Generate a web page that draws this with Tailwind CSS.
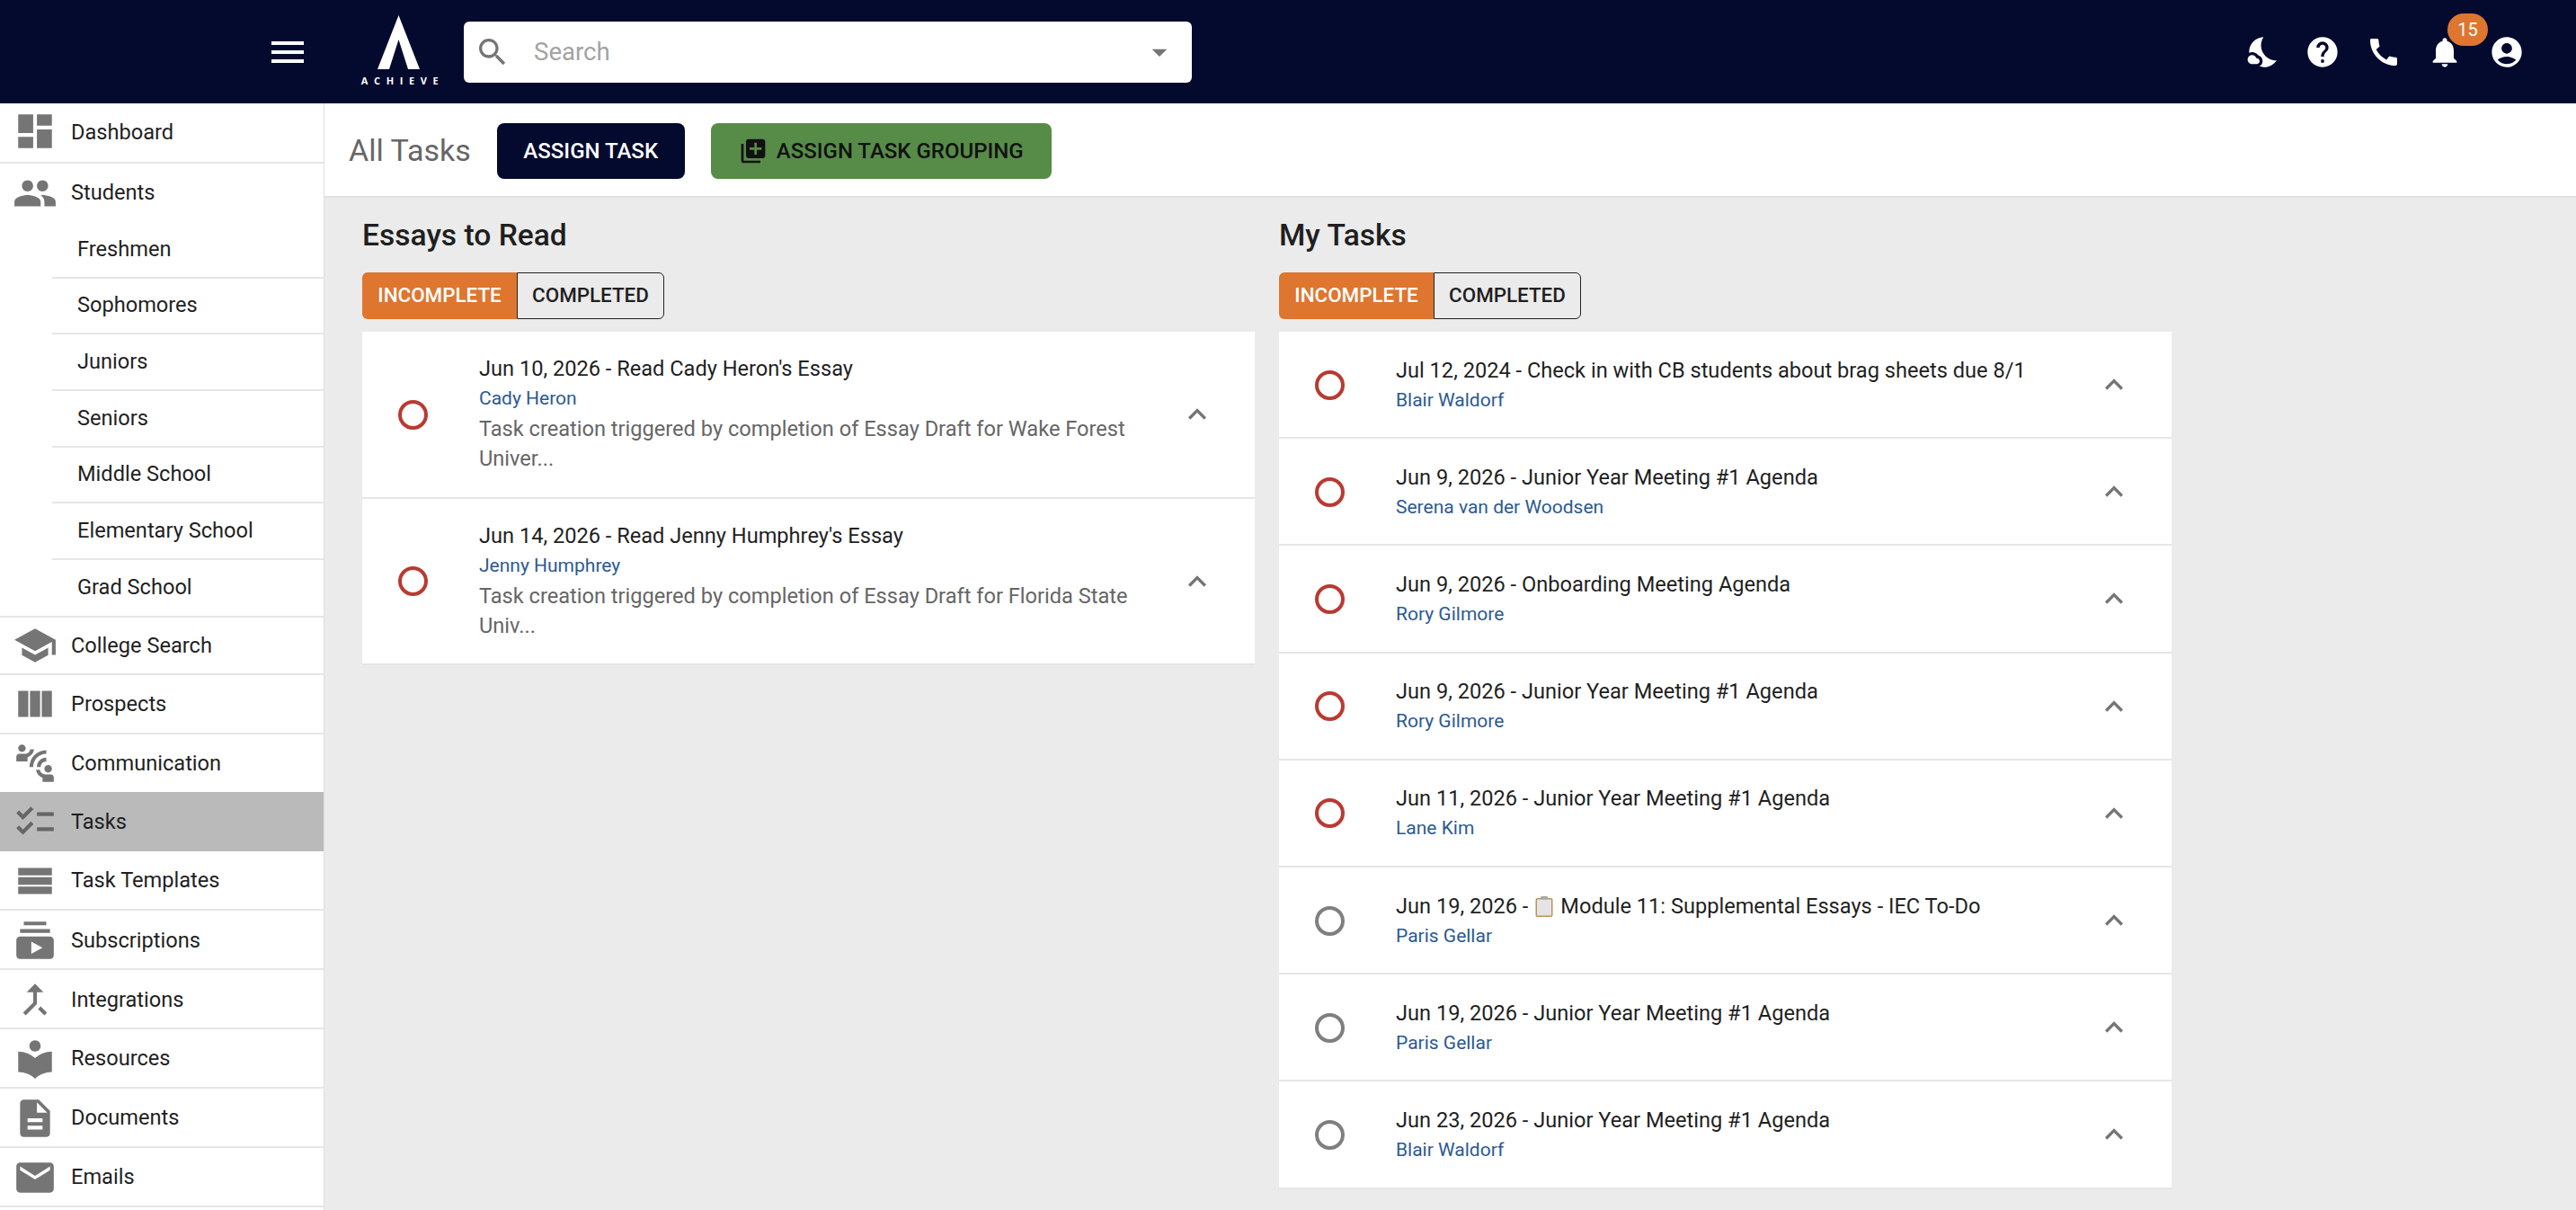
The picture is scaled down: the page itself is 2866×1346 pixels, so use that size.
<!DOCTYPE html>
<html lang="en">
<head>
    <meta charset="UTF-8">
    <title>All Tasks</title>
    <script src="https://cdn.jsdelivr.net/npm/@tailwindcss/browser@4"></script>
</head>
<body class="h-[1346px] overflow-hidden bg-[#ebebeb] font-['Roboto',sans-serif] text-[#1f1f1f]">
    <!-- Top bar -->
    <header class="h-[115px] bg-[#030a2e] flex items-center text-white">
        <div class="w-[360px] flex items-center shrink-0">
            <svg class="ml-[296px] w-[48px] h-[48px] fill-current" viewBox="0 0 24 24"><path d="M3 18h18v-2H3v2zm0-5h18v-2H3v2zm0-7v2h18V6H3z"/></svg>
        </div>
        <div class="w-[100px] shrink-0 ml-[33px] flex flex-col items-center mt-[-2px]">
            <svg class="w-[47px] h-[60px] fill-current" viewBox="0 0 47 60"><polygon points="23.5,0 47,60 34,60 23.5,27 13,60 0,60"/></svg>
            <span class="mt-[6px] text-[11px] leading-[14px] font-bold tracking-[6.6px] pl-[10px] font-['Open_Sans',sans-serif]">ACHIEVE</span>
        </div>
        <div class="w-[810px] h-[68px] ml-[23px] bg-white rounded-[6px] flex items-center pl-[12px] pr-[16px] text-[#757575]">
            <svg class="w-[40px] h-[40px] fill-current" viewBox="0 0 24 24"><path d="M15.5 14h-.79l-.28-.27C15.41 12.59 16 11.11 16 9.5 16 5.91 13.09 3 9.5 3S3 5.91 3 9.5 5.91 16 9.5 16c1.61 0 3.09-.59 4.23-1.57l.27.28v.79l5 4.99L20.49 19l-4.99-5zm-6 0C7.01 14 5 11.99 5 9.5S7.01 5 9.5 5 14 7.01 14 9.5 11.99 14 9.5 14z"/></svg>
            <span class="ml-[26px] pt-[1px] flex-1 text-[27.6px] text-[#a3a3a3]">Search</span>
            <svg class="w-[40px] h-[40px] fill-current" viewBox="0 0 24 24"><path d="M7 10l5 5 5-5z"/></svg>
        </div>
        <div class="ml-auto mr-[57px] flex items-center">
            <svg class="w-[40px] h-[40px] fill-current" viewBox="0 0 24 24"><path d="M11.1 12.08c-2.33-4.51-.5-8.48.53-10.07C6.27 2.2 1.98 6.59 1.98 12c0 .14.02.28.02.42.62-.27 1.29-.42 2-.42 1.66 0 3.18.83 4.1 2.15 1.67.48 2.9 2.02 2.9 3.85 0 1.52-.87 2.83-2.12 3.51.98.32 2.03.5 3.11.5 3.5 0 6.58-1.8 8.37-4.52-2.36.23-6.98-.97-9.26-5.41z"/><path d="M7 16h-.18C6.4 14.84 5.3 14 4 14c-1.66 0-3 1.34-3 3s1.34 3 3 3h3c1.1 0 2-.9 2-2s-.9-2-2-2z"/></svg>
            <svg class="ml-[25px] w-[40px] h-[40px] fill-current" viewBox="0 0 24 24"><path d="M12 2C6.48 2 2 6.48 2 12s4.48 10 10 10 10-4.48 10-10S17.52 2 12 2zm1 17h-2v-2h2v2zm2.07-7.75-.9.92C13.45 12.9 13 13.5 13 15h-2v-.5c0-1.1.45-2.1 1.17-2.83l1.24-1.26c.37-.36.59-.86.59-1.41 0-1.1-.9-2-2-2s-2 .9-2 2H8c0-2.21 1.79-4 4-4s4 1.79 4 4c0 .88-.36 1.68-.93 2.25z"/></svg>
            <svg class="ml-[28px] w-[40px] h-[40px] fill-current" viewBox="0 0 24 24"><path d="M20.01 15.38c-1.23 0-2.42-.2-3.53-.56-.35-.12-.74-.03-1.01.24l-1.57 1.97c-2.83-1.35-5.48-3.9-6.89-6.83l1.95-1.66c.27-.28.35-.67.24-1.02-.37-1.11-.56-2.3-.56-3.53 0-.54-.45-.99-.99-.99H4.19C3.65 3 3 3.24 3 3.99 3 13.28 10.73 21 20.01 21c.71 0 .99-.63.99-1.18v-3.45c0-.54-.45-.99-.99-.99z"/></svg>
            <div class="relative ml-[28px] w-[40px] h-[40px]">
                <svg class="w-[40px] h-[40px] fill-current" viewBox="0 0 24 24"><path d="M12 22c1.1 0 2-.9 2-2h-4c0 1.1.89 2 2 2zm6-6v-5c0-3.07-1.64-5.64-4.5-6.32V4c0-.83-.67-1.5-1.5-1.5s-1.5.67-1.5 1.5v.68C7.63 5.36 6 7.92 6 11v5l-2 2v1h16v-1l-2-2z"/></svg>
                <span class="absolute left-[23px] top-[-23px] w-[45px] h-[36px] rounded-full bg-[#de7630] text-[20px] leading-[36px] text-center">15</span>
            </div>
            <svg class="ml-[29px] w-[40px] h-[40px] fill-current" viewBox="0 0 24 24"><path d="M12 2C6.48 2 2 6.48 2 12s4.48 10 10 10 10-4.48 10-10S17.52 2 12 2zm0 4c1.93 0 3.5 1.57 3.5 3.5S13.93 13 12 13s-3.5-1.57-3.5-3.5S10.07 6 12 6zm0 14c-2.03 0-4.43-.82-6.14-2.88C7.55 15.8 9.68 15 12 15s4.45.8 6.14 2.12C16.43 19.18 14.03 20 12 20z"/></svg>
        </div>
    </header>

    <div class="flex h-[1231px]">
        <!-- Sidebar -->
        <nav class="w-[361px] shrink-0 pt-[1px] bg-white border-r border-[#e0e0e0] overflow-hidden text-[23.6px]">
            <a class="h-[66px] flex items-center border-b-2 border-[#e6e6e6]">
                <svg class="w-[50px] h-[50px] ml-[14px] mt-[-4px] fill-[#757575]" viewBox="0 0 24 24"><path d="M3 13h8V3H3v10zm0 8h8v-6H3v6zm10 0h8V11h-8v10zm0-18v6h8V3h-8z"/></svg>
                <span class="ml-[15px]">Dashboard</span>
            </a>
            <a class="h-[65px] flex items-center">
                <svg class="w-[50px] h-[50px] ml-[14px] fill-[#757575]" viewBox="0 0 24 24"><path d="M16 11c1.66 0 2.99-1.34 2.99-3S17.66 5 16 5c-1.66 0-3 1.34-3 3s1.34 3 3 3zm-8 0c1.66 0 2.99-1.34 2.99-3S9.66 5 8 5C6.34 5 5 6.34 5 8s1.34 3 3 3zm0 2c-2.33 0-7 1.17-7 3.5V19h14v-2.5c0-2.33-4.67-3.5-7-3.5zm8 0c-.29 0-.62.02-.97.05 1.16.84 1.97 1.97 1.97 3.45V19h6v-2.5c0-2.33-4.67-3.5-7-3.5z"/></svg>
                <span class="ml-[15px]">Students</span>
            </a>
            <div class="pl-[58px]">
                <a class="h-[62.65px] pl-[28px] flex items-center border-b-2 border-[#e6e6e6]">Freshmen</a>
                <a class="h-[62.65px] pl-[28px] flex items-center border-b-2 border-[#e6e6e6]">Sophomores</a>
                <a class="h-[62.65px] pl-[28px] flex items-center border-b-2 border-[#e6e6e6]">Juniors</a>
                <a class="h-[62.65px] pl-[28px] flex items-center border-b-2 border-[#e6e6e6]">Seniors</a>
                <a class="h-[62.65px] pl-[28px] flex items-center border-b-2 border-[#e6e6e6]">Middle School</a>
                <a class="h-[62.65px] pl-[28px] flex items-center border-b-2 border-[#e6e6e6]">Elementary School</a>
                <a class="h-[62.65px] pl-[28px] flex items-center">Grad School</a>
            </div>
            <a class="h-[66px] flex items-center border-y-2 border-[#e6e6e6]">
                <svg class="w-[50px] h-[50px] ml-[14px] fill-[#757575]" viewBox="0 0 24 24"><path d="M5 13.18v4L12 21l7-3.82v-4L12 17l-7-3.82zM12 3 1 9l11 6 9-4.91V17h2V9L12 3z"/></svg>
                <span class="ml-[15px]">College Search</span>
            </a>
            <a class="h-[65.5px] flex items-center border-b-2 border-[#e6e6e6]">
                <svg class="w-[50px] h-[50px] ml-[14px] fill-[#757575]" viewBox="0 0 24 24"><path d="M3 5h5.4v14H3zM9.3 5h5.4v14H9.3zM15.6 5H21v14h-5.4z"/></svg>
                <span class="ml-[15px]">Prospects</span>
            </a>
            <a class="h-[64.5px] flex items-center">
                <svg class="w-[50px] h-[50px] ml-[14px] fill-[#757575]" viewBox="0 0 24 24"><path d="M11 14H9c0-4.97 4.03-9 9-9v2c-3.87 0-7 3.13-7 7zm7-3V9c-2.76 0-5 2.24-5 5h2c0-1.66 1.34-3 3-3zM7 4c0-1.11-.89-2-2-2s-2 .89-2 2 .89 2 2 2 2-.89 2-2zm4.45.5h-2C9.21 5.92 7.99 7 6.5 7h-3C2.67 7 2 7.67 2 8.5V11h6V8.74c1.86-.59 3.25-2.23 3.45-4.24zM19 17c1.11 0 2-.89 2-2s-.89-2-2-2-2 .89-2 2 .89 2 2 2zm1.5 1h-3c-1.49 0-2.71-1.08-2.95-2.5h-2c.2 2.01 1.59 3.65 3.45 4.24V22h6v-2.5c0-.83-.67-1.5-1.5-1.5z"/></svg>
                <span class="ml-[15px]">Communication</span>
            </a>
            <a class="h-[65.5px] flex items-center bg-[#bababa]">
                <svg class="w-[50px] h-[50px] ml-[14px] fill-[#666666]" viewBox="0 0 24 24"><path d="M22 7h-9v2h9V7zm0 8h-9v2h9v-2zM5.54 11 2 7.46l1.41-1.41 2.12 2.12 4.24-4.24 1.41 1.41L5.54 11zm0 8L2 15.46l1.41-1.41 2.12 2.12 4.24-4.24 1.41 1.41L5.54 19z"/></svg>
                <span class="ml-[15px]">Tasks</span>
            </a>
            <a class="h-[66.5px] pt-[1px] flex items-center border-b-2 border-[#e6e6e6]">
                <svg class="w-[50px] h-[50px] ml-[14px] fill-[#757575]" viewBox="0 0 24 24"><path d="M3 5h18v4H3zM3 10h18v4H3zM3 15h18v4H3z"/></svg>
                <span class="ml-[15px]">Task Templates</span>
            </a>
            <a class="h-[66px] pt-[2px] flex items-center border-b-2 border-[#e6e6e6]">
                <svg class="w-[50px] h-[50px] ml-[14px] fill-[#757575]" viewBox="0 0 24 24"><path d="M20 8H4V6h16v2zm-2-6H6v2h12V2zm4 10v8c0 1.1-.9 2-2 2H4c-1.1 0-2-.9-2-2v-8c0-1.1.9-2 2-2h16c1.1 0 2 .9 2 2zm-6 4-6-3.27v6.53L16 16z"/></svg>
                <span class="ml-[15px]">Subscriptions</span>
            </a>
            <a class="h-[65.5px] pt-[2px] flex items-center border-b-2 border-[#e6e6e6]">
                <svg class="w-[50px] h-[50px] ml-[14px] fill-[#757575]" viewBox="0 0 24 24"><path d="M17 20.41 18.41 19 15 15.59 13.59 17 17 20.41zM7.5 8H11v5.59L5.59 19 7 20.41l6-6V8h3.5L12 3.5 7.5 8z"/></svg>
                <span class="ml-[15px]">Integrations</span>
            </a>
            <a class="h-[66px] pt-[2px] flex items-center border-b-2 border-[#e6e6e6]">
                <svg class="w-[50px] h-[50px] ml-[14px] fill-[#757575]" viewBox="0 0 24 24"><path d="M12 11.55C9.64 9.35 6.48 8 3 8v11c3.48 0 6.64 1.35 9 3.55 2.36-2.19 5.52-3.55 9-3.55V8c-3.48 0-6.64 1.35-9 3.55zM12 8c1.66 0 3-1.34 3-3s-1.34-3-3-3-3 1.34-3 3 1.34 3 3 3z"/></svg>
                <span class="ml-[15px]">Resources</span>
            </a>
            <a class="h-[66px] pt-[2px] flex items-center border-b-2 border-[#e6e6e6]">
                <svg class="w-[50px] h-[50px] ml-[14px] fill-[#757575]" viewBox="0 0 24 24"><path d="M14 2H6c-1.1 0-1.99.9-1.99 2L4 20c0 1.1.89 2 1.99 2H18c1.1 0 2-.9 2-2V8l-6-6zm2 16H8v-2h8v2zm0-4H8v-2h8v2zm-3-5V3.5L18.5 9H13z"/></svg>
                <span class="ml-[15px]">Documents</span>
            </a>
            <a class="h-[66px] pt-[2px] flex items-center border-b-2 border-[#e6e6e6]">
                <svg class="w-[50px] h-[50px] ml-[14px] fill-[#757575]" viewBox="0 0 24 24"><path d="M20 4H4c-1.1 0-1.99.9-1.99 2L2 18c0 1.1.9 2 2 2h16c1.1 0 2-.9 2-2V6c0-1.1-.9-2-2-2zm0 4-8 5-8-5V6l8 5 8-5v2z"/></svg>
                <span class="ml-[15px]">Emails</span>
            </a>
        </nav>

        <main class="flex-1 min-w-0">
            <!-- Page title row -->
            <div class="h-[105px] bg-white border-b-2 border-[#e2e2e2] flex items-center pl-[27px] pt-[2px]">
                <h1 class="text-[34px] text-[#666666] font-normal">All Tasks</h1>
                <button class="ml-[29px] w-[209px] h-[62px] rounded-[8px] bg-[#030a2e] text-white text-[24px] font-medium">ASSIGN TASK</button>
                <button class="ml-[29px] w-[379px] h-[62px] rounded-[8px] bg-[#578c48] text-[#111] text-[24px] font-medium flex items-center justify-center gap-[10px]">
                    <svg class="w-[32px] h-[32px] fill-current" viewBox="0 0 24 24"><path d="M4 6H2v14c0 1.1.9 2 2 2h14v-2H4V6zm16-4H8c-1.1 0-2 .9-2 2v12c0 1.1.9 2 2 2h12c1.1 0 2-.9 2-2V4c0-1.1-.9-2-2-2zm-1 9h-4v4h-2v-4H9V9h4V5h2v4h4v2z"/></svg>
                    ASSIGN TASK GROUPING
                </button>
            </div>

            <div class="flex pl-[42px] gap-[27px]">
                <!-- Essays to Read -->
                <section class="w-[993px]">
                    <h2 class="h-[83px] pt-[19px] text-[33.6px] leading-[46px] font-medium">Essays to Read</h2>
                    <div class="flex h-[52px] text-[22.4px] font-medium">
                        <button class="w-[172px] bg-[#de7630] text-white rounded-l-[6px]">INCOMPLETE</button>
                        <button class="w-[164px] border border-[#222] rounded-r-[6px]">COMPLETED</button>
                    </div>
                    <ul class="mt-[14px] bg-white">
                        <li class="h-[185.5px] flex items-center border-b-2 border-[#e6e6e6]">
                            <span class="ml-[40px] mt-[1px] w-[33px] h-[33px] rounded-full border-[4px] border-[#b93a32] shrink-0"></span>
                            <div class="ml-[57px] flex-1 min-w-0">
                                <p class="text-[23.6px] leading-[33px]">Jun 10, 2026 - Read Cady Heron's Essay</p>
                                <p class="mt-[3px] text-[21px] leading-[27px] text-[#2c5a92]">Cady Heron</p>
                                <p class="mt-[4px] w-[760px] text-[23.6px] leading-[33px] text-[#666666]">Task creation triggered by completion of Essay Draft for Wake Forest Univer...</p>
                            </div>
                            <svg class="w-[40px] h-[40px] mt-[1px] mr-[44px] fill-[#757575]" viewBox="0 0 24 24"><path d="M7.41 15.41 12 10.83l4.59 4.58L18 14l-6-6-6 6z"/></svg>
                        </li>
                        <li class="h-[185.5px] flex items-center border-b-2 border-[#e6e6e6]">
                            <span class="ml-[40px] mt-[1px] w-[33px] h-[33px] rounded-full border-[4px] border-[#b93a32] shrink-0"></span>
                            <div class="ml-[57px] flex-1 min-w-0">
                                <p class="text-[23.6px] leading-[33px]">Jun 14, 2026 - Read Jenny Humphrey's Essay</p>
                                <p class="mt-[3px] text-[21px] leading-[27px] text-[#2c5a92]">Jenny Humphrey</p>
                                <p class="mt-[4px] w-[760px] text-[23.6px] leading-[33px] text-[#666666]">Task creation triggered by completion of Essay Draft for Florida State Univ...</p>
                            </div>
                            <svg class="w-[40px] h-[40px] mt-[1px] mr-[44px] fill-[#757575]" viewBox="0 0 24 24"><path d="M7.41 15.41 12 10.83l4.59 4.58L18 14l-6-6-6 6z"/></svg>
                        </li>
                    </ul>
                </section>

                <!-- My Tasks -->
                <section class="w-[993px]">
                    <h2 class="h-[83px] pt-[19px] text-[33.6px] leading-[46px] font-medium">My Tasks</h2>
                    <div class="flex h-[52px] text-[22.4px] font-medium">
                        <button class="w-[172px] bg-[#de7630] text-white rounded-l-[6px]">INCOMPLETE</button>
                        <button class="w-[164px] border border-[#222] rounded-r-[6px]">COMPLETED</button>
                    </div>
                    <ul class="mt-[14px] bg-white">
                        <li class="h-[119.2px] flex items-center border-b-2 border-[#e6e6e6]">
                            <span class="ml-[40px] mt-[1px] w-[33px] h-[33px] rounded-full border-[4px] border-[#b93a32] shrink-0"></span>
                            <div class="ml-[57px] mb-[1px] flex-1 min-w-0">
                                <p class="text-[23.6px] leading-[33px]">Jul 12, 2024 - Check in with CB students about brag sheets due 8/1</p>
                                <p class="mt-[3px] text-[21px] leading-[27px] text-[#2c5a92]">Blair Waldorf</p>
                            </div>
                            <svg class="w-[40px] h-[40px] mt-[1px] mr-[44px] fill-[#757575]" viewBox="0 0 24 24"><path d="M7.41 15.41 12 10.83l4.59 4.58L18 14l-6-6-6 6z"/></svg>
                        </li>
                        <li class="h-[119.2px] flex items-center border-b-2 border-[#e6e6e6]">
                            <span class="ml-[40px] mt-[1px] w-[33px] h-[33px] rounded-full border-[4px] border-[#b93a32] shrink-0"></span>
                            <div class="ml-[57px] mb-[1px] flex-1 min-w-0">
                                <p class="text-[23.6px] leading-[33px]">Jun 9, 2026 - Junior Year Meeting #1 Agenda</p>
                                <p class="mt-[3px] text-[21px] leading-[27px] text-[#2c5a92]">Serena van der Woodsen</p>
                            </div>
                            <svg class="w-[40px] h-[40px] mt-[1px] mr-[44px] fill-[#757575]" viewBox="0 0 24 24"><path d="M7.41 15.41 12 10.83l4.59 4.58L18 14l-6-6-6 6z"/></svg>
                        </li>
                        <li class="h-[119.2px] flex items-center border-b-2 border-[#e6e6e6]">
                            <span class="ml-[40px] mt-[1px] w-[33px] h-[33px] rounded-full border-[4px] border-[#b93a32] shrink-0"></span>
                            <div class="ml-[57px] mb-[1px] flex-1 min-w-0">
                                <p class="text-[23.6px] leading-[33px]">Jun 9, 2026 - Onboarding Meeting Agenda</p>
                                <p class="mt-[3px] text-[21px] leading-[27px] text-[#2c5a92]">Rory Gilmore</p>
                            </div>
                            <svg class="w-[40px] h-[40px] mt-[1px] mr-[44px] fill-[#757575]" viewBox="0 0 24 24"><path d="M7.41 15.41 12 10.83l4.59 4.58L18 14l-6-6-6 6z"/></svg>
                        </li>
                        <li class="h-[119.2px] flex items-center border-b-2 border-[#e6e6e6]">
                            <span class="ml-[40px] mt-[1px] w-[33px] h-[33px] rounded-full border-[4px] border-[#b93a32] shrink-0"></span>
                            <div class="ml-[57px] mb-[1px] flex-1 min-w-0">
                                <p class="text-[23.6px] leading-[33px]">Jun 9, 2026 - Junior Year Meeting #1 Agenda</p>
                                <p class="mt-[3px] text-[21px] leading-[27px] text-[#2c5a92]">Rory Gilmore</p>
                            </div>
                            <svg class="w-[40px] h-[40px] mt-[1px] mr-[44px] fill-[#757575]" viewBox="0 0 24 24"><path d="M7.41 15.41 12 10.83l4.59 4.58L18 14l-6-6-6 6z"/></svg>
                        </li>
                        <li class="h-[119.2px] flex items-center border-b-2 border-[#e6e6e6]">
                            <span class="ml-[40px] mt-[1px] w-[33px] h-[33px] rounded-full border-[4px] border-[#b93a32] shrink-0"></span>
                            <div class="ml-[57px] mb-[1px] flex-1 min-w-0">
                                <p class="text-[23.6px] leading-[33px]">Jun 11, 2026 - Junior Year Meeting #1 Agenda</p>
                                <p class="mt-[3px] text-[21px] leading-[27px] text-[#2c5a92]">Lane Kim</p>
                            </div>
                            <svg class="w-[40px] h-[40px] mt-[1px] mr-[44px] fill-[#757575]" viewBox="0 0 24 24"><path d="M7.41 15.41 12 10.83l4.59 4.58L18 14l-6-6-6 6z"/></svg>
                        </li>
                        <li class="h-[119.2px] flex items-center border-b-2 border-[#e6e6e6]">
                            <span class="ml-[40px] mt-[1px] w-[33px] h-[33px] rounded-full border-[4px] border-[#7f7f7f] shrink-0"></span>
                            <div class="ml-[57px] mb-[1px] flex-1 min-w-0">
                                <p class="text-[23.6px] leading-[33px] flex items-center">Jun 19, 2026 -
                                    <svg class="w-[20px] h-[23px] mx-[8px]" viewBox="0 0 20 23"><rect x="0.5" y="2" width="19" height="21" rx="2" fill="#b7945f"/><rect x="2" y="3.5" width="16" height="18" fill="#e4e4e4"/><rect x="6" y="0" width="8" height="3.5" rx="1" fill="#a8a8a8"/></svg>
                                    Module 11: Supplemental Essays - IEC To-Do</p>
                                <p class="mt-[3px] text-[21px] leading-[27px] text-[#2c5a92]">Paris Gellar</p>
                            </div>
                            <svg class="w-[40px] h-[40px] mt-[1px] mr-[44px] fill-[#757575]" viewBox="0 0 24 24"><path d="M7.41 15.41 12 10.83l4.59 4.58L18 14l-6-6-6 6z"/></svg>
                        </li>
                        <li class="h-[119.2px] flex items-center border-b-2 border-[#e6e6e6]">
                            <span class="ml-[40px] mt-[1px] w-[33px] h-[33px] rounded-full border-[4px] border-[#7f7f7f] shrink-0"></span>
                            <div class="ml-[57px] mb-[1px] flex-1 min-w-0">
                                <p class="text-[23.6px] leading-[33px]">Jun 19, 2026 - Junior Year Meeting #1 Agenda</p>
                                <p class="mt-[3px] text-[21px] leading-[27px] text-[#2c5a92]">Paris Gellar</p>
                            </div>
                            <svg class="w-[40px] h-[40px] mt-[1px] mr-[44px] fill-[#757575]" viewBox="0 0 24 24"><path d="M7.41 15.41 12 10.83l4.59 4.58L18 14l-6-6-6 6z"/></svg>
                        </li>
                        <li class="h-[119.2px] flex items-center border-b-2 border-[#e6e6e6]">
                            <span class="ml-[40px] mt-[1px] w-[33px] h-[33px] rounded-full border-[4px] border-[#7f7f7f] shrink-0"></span>
                            <div class="ml-[57px] mb-[1px] flex-1 min-w-0">
                                <p class="text-[23.6px] leading-[33px]">Jun 23, 2026 - Junior Year Meeting #1 Agenda</p>
                                <p class="mt-[3px] text-[21px] leading-[27px] text-[#2c5a92]">Blair Waldorf</p>
                            </div>
                            <svg class="w-[40px] h-[40px] mt-[1px] mr-[44px] fill-[#757575]" viewBox="0 0 24 24"><path d="M7.41 15.41 12 10.83l4.59 4.58L18 14l-6-6-6 6z"/></svg>
                        </li>
                    </ul>
                </section>
            </div>
        </main>
    </div>
</body>
</html>
